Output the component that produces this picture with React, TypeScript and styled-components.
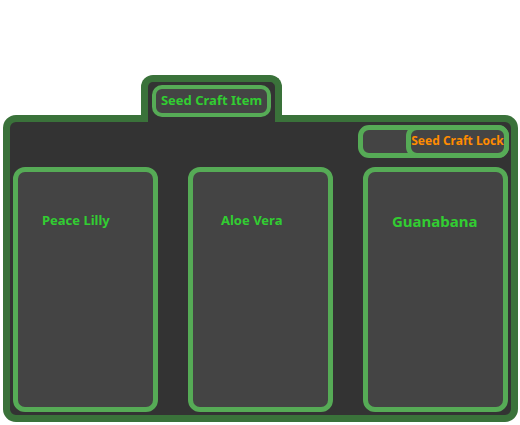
import React from 'react';
import styled, { createGlobalStyle } from 'styled-components';

const color = {
  frame: '#3a723a',
  outline: '#56ab56',
  base: '#333333',
  surface: '#444444',
  label: '#32cd32',
  locked: '#ff8c00',
};

const GlobalStyle = createGlobalStyle`
  *, *::before, *::after { box-sizing: border-box; }
  body {
    margin: 0;
    background: #ffffff;
    font-family: "Noto Sans", "Open Sans", sans-serif;
    font-weight: 700;
  }
`;

const Page = styled.main`
  display: flex;
  flex-direction: column;
  align-items: flex-start;
  padding: 75px 2px 3px 3px;
`;

const Tab = styled.header`
  z-index: 1;
  margin: 0 0 -7px 138px;
  padding: 3px 4px 5px;
  border: 7px solid ${color.frame};
  border-bottom: 0;
  border-radius: 12px 12px 0 0;
  background: ${color.base};
`;

const TabButton = styled.button`
  display: block;
  min-width: 119px;
  padding: 0 0 2px;
  border: 4px solid ${color.outline};
  border-radius: 10px;
  background: ${color.surface};
  color: ${color.label};
  font: inherit;
  font-size: 13px;
  line-height: 22px;
  text-align: center;
  white-space: nowrap;
`;

const Panel = styled.section`
  align-self: stretch;
  padding: 3px;
  border: 7px solid ${color.frame};
  border-radius: 13px;
  background: ${color.base};
`;

const Toolbar = styled.div`
  display: flex;
  justify-content: flex-end;
  margin-bottom: 9px;
`;

const LockSlot = styled.div`
  display: flex;
  justify-content: flex-end;
  width: 151px;
  margin-right: -1px;
  border: 5px solid ${color.outline};
  border-radius: 11px;
  background: ${color.surface};
`;

const LockButton = styled.button`
  width: 103px;
  margin: -5px;
  padding: 0 0 1px;
  border: 5px solid ${color.outline};
  border-radius: 11px;
  background: ${color.surface};
  color: ${color.locked};
  font: inherit;
  font-size: 12px;
  line-height: 22px;
  white-space: nowrap;
`;

const CardGrid = styled.div`
  display: grid;
  grid-template-columns: repeat(3, 1fr);
  gap: 30px;
`;

const Card = styled.article<{ $inset: number }>`
  min-height: 245px;
  padding: 38px 0 0 ${(p) => p.$inset}px;
  border: 5px solid ${color.outline};
  border-radius: 12px;
  background: ${color.surface};
`;

const CardTitle = styled.h2<{ $large?: boolean }>`
  margin: 0;
  color: ${color.label};
  font-size: ${(p) => (p.$large ? 15 : 13)}px;
  line-height: ${(p) => (p.$large ? 22 : 20)}px;
  white-space: nowrap;
`;

const seeds = [
  { name: 'Peace Lilly', inset: 24, large: false },
  { name: 'Aloe Vera', inset: 28, large: false },
  { name: 'Guanabana', inset: 24, large: true },
];

export default function App() {
  return (
    <>
      <GlobalStyle />
      <Page>
        <Tab>
          <TabButton type="button">Seed Craft Item</TabButton>
        </Tab>
        <Panel>
          <Toolbar>
            <LockSlot>
              <LockButton type="button">Seed Craft Lock</LockButton>
            </LockSlot>
          </Toolbar>
          <CardGrid>
            {seeds.map((seed) => (
              <Card key={seed.name} $inset={seed.inset}>
                <CardTitle $large={seed.large}>{seed.name}</CardTitle>
              </Card>
            ))}
          </CardGrid>
        </Panel>
      </Page>
    </>
  );
}
